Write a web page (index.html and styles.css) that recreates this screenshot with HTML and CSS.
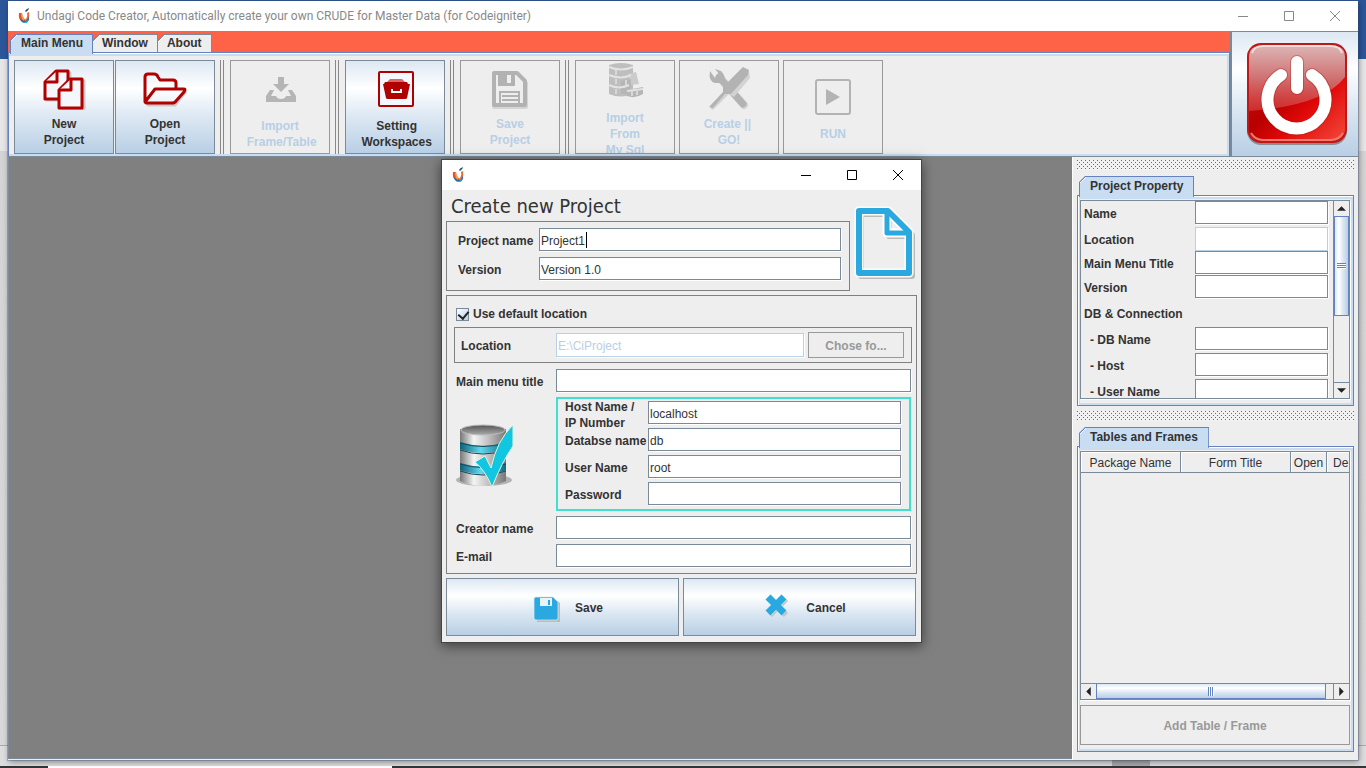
FILE: index.html
```html
<!DOCTYPE html>
<html lang="en">
<head>
<meta charset="utf-8">
<title>Undagi Code Creator</title>
<link rel="stylesheet" href="styles.css">
</head>
<body>
<svg class="defs" width="0" height="0" aria-hidden="true">
  <defs>
    <symbol id="logo" viewBox="0 0 13 16">
      <path d="M1 5Q0 11 4 13Q6 14 8 13L5 9Q4 7 4 5Z" fill="#e8512a"/>
      <path d="M9 5Q10 9 7 12L8 13Q12 12 11 4Z" fill="#f26a2e"/>
      <path d="M4 5Q4 8 6 10V13Q3 11 3 6Z" fill="#f9a04a"/>
      <path d="M1 8Q2 12 6 13Q10 13 11 8Q12 14 7 15Q2 15 1 8Z" fill="#1b6f9f"/>
      <path d="M4 14Q7 15 10 12L9 15L6 15Z" fill="#25b4d4"/>
      <path d="M7 3Q8 1 11 0Q11 2 8 4Z" fill="#1f4f78"/>
    </symbol>
    <symbol id="min" viewBox="0 0 12 12"><path d="M1 6.5H11" stroke="currentColor"/></symbol>
    <symbol id="max" viewBox="0 0 12 12"><path d="M1.5 1.5H10.5V10.5H1.5Z" fill="none" stroke="currentColor"/></symbol>
    <symbol id="close" viewBox="0 0 12 12"><path d="M1 1L11 11M11 1L1 11" stroke="currentColor"/></symbol>
    <linearGradient id="metal"><stop offset="0" stop-color="#777"/><stop offset=".3" stop-color="#f4f4f4"/><stop offset=".6" stop-color="#c4c4c4"/><stop offset="1" stop-color="#777"/></linearGradient>
    <linearGradient id="band"><stop offset="0" stop-color="#0d5f76"/><stop offset=".45" stop-color="#5fd9f0"/><stop offset="1" stop-color="#0d6a82"/></linearGradient>
    <linearGradient id="lid" x2="0" y2="1"><stop offset="0" stop-color="#555"/><stop offset="1" stop-color="#aaa"/></linearGradient>
    <linearGradient id="red" x2="1" y2="1"><stop offset="0" stop-color="#c81414"/><stop offset=".45" stop-color="#b80000"/><stop offset=".65" stop-color="#e00808"/><stop offset="1" stop-color="#f24a3c"/></linearGradient>
    <linearGradient id="gloss" x2="0" y2="1"><stop offset="0" stop-color="#dcb4b4"/><stop offset=".5" stop-color="#d07070"/><stop offset="1" stop-color="#d83c3c" stop-opacity=".7"/></linearGradient>
  </defs>
</svg>

<div class="window">
  <header class="titlebar">
    <svg class="logo"><use href="#logo"/></svg>
    <h1>Undagi Code Creator, Automatically create your own CRUDE for Master Data (for Codeigniter)</h1>
    <button class="winbtn" aria-label="Minimize"><svg><use href="#min"/></svg></button>
    <button class="winbtn" aria-label="Maximize"><svg><use href="#max"/></svg></button>
    <button class="winbtn" aria-label="Close"><svg><use href="#close"/></svg></button>
  </header>

  <div class="ribbon">
    <div class="ribbon-main">
      <div class="tabs menu-tabs" role="tablist">
        <button class="tab active" role="tab" aria-selected="true">Main Menu</button>
        <button class="tab" role="tab">Window</button>
        <button class="tab" role="tab">About</button>
      </div>
      <div class="toolbar">
        <button class="tool small-icon">
          <svg viewBox="0 0 44 44"><g fill="none" stroke-linejoin="round" stroke-width="3"><g stroke="#c9c9c9"><path d="M15 7H28V34H5V17Z"/><path d="M29 15H42V43H19V25Z"/></g><g stroke="#b00000" fill="#f4f8fc"><path d="M14 5H26V33H3V16Z"/><path d="M15 5V16H3"/><path d="M28 13H40V42H17V24Z"/><path d="M29 13V24H17"/></g></g></svg>
          <span>New<br>Project</span>
        </button>
        <button class="tool small-icon">
          <svg viewBox="0 0 44 44"><g fill="none" stroke-linejoin="round" stroke-width="3"><path d="M4 39H32L43 25" stroke="#c9c9c9"/><path d="M2 36V11Q2 8 5 8H11Q14 8 15 11L17 14H30Q33 14 33 17V22M2 36L12 23H41Q43 23 41 26L33 35Q32 37 29 37H3Z" stroke="#b00000"/></g></svg>
          <span>Open<br>Project</span>
        </button>
        <span class="sep"></span>
        <button class="tool" disabled>
          <svg viewBox="0 0 48 48"><g fill="#b5b5b5"><path d="M22 13H28V20H33L25 28L17 20H22Z"/><path d="M14 26H18L15 32H20Q21 35 25 35Q29 35 30 32H35L32 26H36L40 32V38H10V32Z"/></g></svg>
          <span>Import<br>&nbsp;Frame/Table</span>
        </button>
        <span class="sep"></span>
        <button class="tool">
          <svg viewBox="0 0 48 48"><rect x="8" y="8" width="34" height="34" rx="1" fill="#f3f8fd" stroke="#b00000" stroke-width="2"/><path d="M19 15H31L34 18H16Z" fill="#d66"/><path d="M14 18H36L37 20H39L36 34Q36 35 34 35H17Q15 35 15 34L12 20H13Z" fill="#b00000"/><path d="M21 25V28H30V25" fill="none" stroke="#fff" stroke-width="2"/></svg>
          <span>&nbsp;Setting<br>&nbsp;Workspaces</span>
        </button>
        <span class="sep"></span>
        <button class="tool small-icon" disabled>
          <svg viewBox="0 0 44 44"><g fill="none" stroke-linejoin="round" stroke-width="4"><path d="M6 8V41H38V16" stroke="#d4d4d4"/><path d="M6 7H29L37 15V39H6Z" stroke="#b2b2b2"/></g><path d="M10 6H27V20H10Z" fill="#b2b2b2"/><path d="M19 9H23V17H19Z" fill="#eee"/><path d="M12 37V26H31V37M14 30H30M14 34H30" fill="none" stroke="#b2b2b2" stroke-width="2"/></svg>
          <span>Save<br>Project</span>
        </button>
        <span class="sep"></span>
        <button class="tool gap-after" disabled>
          <svg viewBox="0 0 48 48"><g fill="#bebebe"><path d="M8 9Q20 5 32 9V38Q20 43 8 38Z"/><path d="M27 18L35 16L38 28L30 29Z" fill="#cbcbcb"/><path d="M20 25L30 23V38H20ZM26 34L42 31V38Q34 43 26 40Z" fill="#b6b6b6"/></g><path d="M8 11Q20 16 32 11M8 19Q20 24 30 19M8 29Q18 34 28 29M26 35L42 33" fill="none" stroke="#e2e2e2" stroke-width="2"/><path d="M15 14V19M15 23V28M15 33V38M25 24V29M31 35V40M36 35V39" stroke="#d8d8d8" stroke-width="2"/></svg>
          <span>Import<br>From<br>My Sql</span>
        </button>
        <button class="tool small-icon gap-after" disabled>
          <svg viewBox="0 0 44 44"><g stroke-linecap="round" fill="none"><path d="M13 12L37 39" stroke="#d5d5d5" stroke-width="8"/><path d="M12 11L36 38" stroke="#b3b3b3" stroke-width="7"/></g><path d="M3 5Q1 15 8 17L17 17Q20 11 14 5L8 3L12 8L8 12Z" fill="#b3b3b3"/><path d="M42 6L34 3L16 22L19 27L3 42L6 44L22 28L27 31L43 12Z" fill="#d3d3d3"/><path d="M36 1L42 4L41 9L24 28L18 28L6 42L2 41L16 26L16 21Z" fill="#b3b3b3"/></svg>
          <span>Create ||&nbsp;<br>GO!</span>
        </button>
        <button class="tool" disabled>
          <svg viewBox="0 0 48 48"><rect x="7" y="8" width="34" height="34" rx="2" fill="none" stroke="#b3b3b3" stroke-width="2"/><path d="M17 17V33L31 25Z" fill="#b3b3b3"/></svg>
          <span>RUN</span>
        </button>
      </div>
    </div>
    <button class="power" aria-label="Exit">
      <svg viewBox="0 0 100 102"><rect x="0" y="1" width="100" height="101" rx="14" fill="#8a8f94"/><rect x="0" y="0" width="100" height="100" rx="14" fill="#c01818"/><rect x="2" y="3" width="96" height="94" rx="11" fill="url(#red)"/><path d="M2 14Q2 3 14 3H86Q98 3 98 14V34Q76 63 2 68Z" fill="url(#gloss)"/><path d="M5 10Q7 3 16 3H84Q93 3 95 10" fill="none" stroke="#f3dede" stroke-width="2"/><path d="M4 90Q8 97 16 97H84Q92 97 96 90" fill="none" stroke="#f47a70" stroke-width="2"/><g fill="none" stroke-linecap="round"><path d="M34 32A29 29 0 1 0 65 32M50 19V45" stroke="#a01818" stroke-opacity=".35" stroke-width="14"/><path d="M34 32A29 29 0 1 0 65 32M50 19V45" stroke="#fff" stroke-width="12"/></g></svg>
    </button>
  </div>

  <div class="workspace">
    <main class="desktop"></main>
    <aside class="sidebar">
      <div class="grip"></div>
      <section class="group">
        <div class="tabs" role="tablist"><button class="tab active" role="tab" aria-selected="true">Project Property</button></div>
        <div class="panel">
          <div class="scrollpane props">
            <form class="props-form">
              <div class="prop"><label for="p1">Name</label><input id="p1" type="text"></div>
              <div class="prop tight"><label for="p2">Location</label><input id="p2" type="text" disabled></div>
              <div class="prop tight"><label for="p3">Main Menu Title</label><input id="p3" type="text"></div>
              <div class="prop"><label for="p4">Version</label><input id="p4" type="text"></div>
              <div class="prop"><span>DB &amp; Connection</span></div>
              <div class="prop sub"><label for="p5">- DB Name</label><input id="p5" type="text"></div>
              <div class="prop sub"><label for="p6">- Host</label><input id="p6" type="text"></div>
              <div class="prop sub"><label for="p7">- User Name</label><input id="p7" type="text"></div>
            </form>
            <div class="vscroll">
              <button aria-label="Scroll up"><svg viewBox="0 0 8 4"><path d="M0 4L4 0L8 4Z"/></svg></button>
              <div class="track"><div class="thumb"></div></div>
              <button aria-label="Scroll down"><svg viewBox="0 0 8 4"><path d="M0 0H8L4 4Z"/></svg></button>
            </div>
          </div>
        </div>
      </section>
      <div class="grip"></div>
      <section class="group grow">
        <div class="tabs" role="tablist"><button class="tab active" role="tab" aria-selected="true">Tables and Frames</button></div>
        <div class="panel">
          <div class="scrollpane tables">
            <div class="table-view">
              <table>
                <colgroup><col class="c-package"><col class="c-form"><col class="c-open"><col class="c-last"></colgroup>
                <thead><tr><th>Package Name</th><th>Form Title</th><th>Open</th><th class="cut">De</th></tr></thead>
              </table>
            </div>
            <div class="hscroll">
              <button aria-label="Scroll left"><svg viewBox="0 0 4 8"><path d="M4 0V8L0 4Z"/></svg></button>
              <div class="track"><div class="thumb"></div></div>
              <button aria-label="Scroll right"><svg viewBox="0 0 4 8"><path d="M0 0V8L4 4Z"/></svg></button>
            </div>
          </div>
          <button class="plain add" disabled>Add Table / Frame</button>
        </div>
      </section>
    </aside>
  </div>
</div>

<div class="dialog" role="dialog" aria-label="Create new Project">
  <div class="titlebar">
    <svg class="logo"><use href="#logo"/></svg>
    <span class="fill"></span>
    <button class="winbtn" aria-label="Minimize"><svg><use href="#min"/></svg></button>
    <button class="winbtn" aria-label="Maximize"><svg><use href="#max"/></svg></button>
    <button class="winbtn" aria-label="Close"><svg><use href="#close"/></svg></button>
  </div>
  <form class="dialog-body">
    <div class="intro">
      <div class="intro-main">
        <h2>Create new Project</h2>
        <div class="box basics">
          <label for="name">Project name</label><input id="name" type="text" value="Project1">
          <label for="version">Version</label><input id="version" type="text" value="Version 1.0">
          <span class="caret"></span>
        </div>
      </div>
      <svg class="file-icon" viewBox="0 0 64 76"><g fill="none" stroke-linejoin="round"><path d="M8 9H37L59 30V71H8Z" stroke="#b9b9b9" stroke-width="6"/><path d="M36 9V31H57" stroke="#b9b9b9" stroke-width="6"/><path d="M6 6H35L56 27V68H6Z" stroke="#fff" stroke-width="9"/><path d="M34 6V28H56" stroke="#fff" stroke-width="9"/><path d="M6 6H35L56 27V68H6Z" stroke="#29a9e0" stroke-width="6"/><path d="M34 6V28H56" stroke="#29a9e0" stroke-width="5"/></g></svg>
    </div>

    <div class="box details">
      <label class="check"><input type="checkbox" checked>Use default location</label>
      <div class="box location">
        <label for="loc">Location</label>
        <input id="loc" type="text" value="E:\CiProject" disabled>
        <button class="plain" type="button" disabled>Chose fo...</button>
      </div>
      <div class="fields">
        <label for="menu">Main menu title</label><input id="menu" type="text">
        <svg class="db-icon" viewBox="0 0 60 68"><ellipse cx="28" cy="58" rx="28" ry="6" fill="#999" opacity=".7"/><path d="M4 7V59Q27 69 50 59V7Z" fill="url(#metal)"/><path d="M4 20Q27 27 50 20V27Q27 35 4 27ZM4 41Q27 48 50 41V48Q27 56 4 48Z" fill="url(#band)"/><path d="M4 21Q27 28 50 21M4 28Q27 36 50 28M4 42Q27 49 50 42M4 49Q27 57 50 49" fill="none" stroke="#14485a"/><ellipse cx="27" cy="8" rx="22" ry="5" fill="url(#lid)" stroke="#bbb"/><path d="M19 40L29 34L35 46Q41 18 57 3L57 24Q46 40 36 65Q29 48 19 40Z" fill="#10c6e0" stroke="#e8f4d8" stroke-width="1"/></svg>
        <div class="database">
          <label class="two-line" for="host">Host Name /<br>IP Number</label><input id="host" type="text" value="localhost">
          <label for="db">Databse name</label><input id="db" type="text" value="db">
          <label for="user">User Name</label><input id="user" type="text" value="root">
          <label for="pass">Password</label><input id="pass" type="password">
        </div>
        <label for="creator">Creator name</label><input id="creator" type="text">
        <label for="email">E-mail</label><input id="email" type="email">
      </div>
    </div>

    <div class="actions">
      <button type="button" class="action">
        <svg viewBox="0 0 28 28"><path d="M5 6H24L28 9V28H5Z" fill="#bbb"/><path d="M2 5Q2 3 4 3H21L26 8V24Q26 26 24 26H4Q2 26 2 24Z" fill="#29a9e0" stroke="#d9effa" stroke-width=".7"/><path d="M8 4H20V12H8Z" fill="#e7f4fb"/><path d="M16 6H18V11H16Z" fill="#29a9e0"/></svg>
        Save
      </button>
      <button type="button" class="action">
        <svg viewBox="0 0 28 28"><path d="M7 5L23 21M23 5L7 21" stroke="#c4c4c4" stroke-width="6"/><path d="M5 3L21 19M21 3L5 19" stroke="#e4f3fb" stroke-width="8"/><path d="M5 3L21 19M21 3L5 19" stroke="#29a9e0" stroke-width="7"/></svg>
        Cancel
      </button>
    </div>
  </form>
</div>
</body>
</html>
```
FILE: styles.css
```css
* { box-sizing: border-box; }

:root {
  --steel: #7a8a99;
  --blue: #6382bf;
  --pale: #c8ddf2;
  --face: #eee;
  --metal: linear-gradient(#dde8f3, #fff 30%, #dde8f3 60%, #b8cfe5);
}

body {
  margin: 0;
  height: 100vh;
  padding: 1px 8px 8px;
  overflow: hidden;
  font: bold 12px/16px "Liberation Sans", Arial, sans-serif;
  color: #333;
  background:
    linear-gradient(#fff, #fff) 48px 100% / 344px 2px no-repeat,
    linear-gradient(#333538, #333538) 0 100% / 100% 2px no-repeat,
    linear-gradient(#aaa, #aaa) 1112px 100% / 38px 8px no-repeat,
    linear-gradient(#2b579a 59px, #e6e6e6 59px, #e6e6e6 151px, #d4d4d4 151px, #d8d8d8 745px, #aaa 745px, #aaa 746px, #ddd 746px);
}

button, input { font: inherit; color: inherit; margin: 0; border-radius: 0; }
button { padding: 0; border: 0; background: none; }
h1, h2 { margin: 0; font-weight: normal; }
.defs { position: absolute; }

/* windows */
.window {
  height: 100%;
  display: flex;
  flex-direction: column;
  background: var(--face);
  box-shadow: 0 0 0 1px #39527d55, 1px 2px 6px #0006;
}
.titlebar {
  flex: none;
  display: flex;
  align-items: center;
  height: 30px;
  padding-left: 10px;
  background: #fff;
  color: #888;
}
.titlebar h1 { flex: 1; font: 12px/16px Roboto, "Open Sans", sans-serif; color: #888; }
.logo { width: 13px; height: 16px; margin-right: 6px; }
.fill { flex: 1; }
.winbtn { width: 46px; height: 28px; display: grid; place-items: center; }
.winbtn svg { width: 12px; height: 12px; }

/* tabs */
.tabs { display: flex; padding-left: 2px; }
.tab {
  height: 19px;
  padding: 0 9px;
  border: 1px solid var(--steel);
  border-bottom: 0;
  background: linear-gradient(135deg, var(--steel) 5px, #fff 5px, #fff 6px, var(--face) 6px) border-box;
  clip-path: polygon(6px 0, 100% 0, 100% 100%, 0 100%, 0 6px);
}
.tab + .tab { border-left: 0; }
.tab.active {
  position: relative;
  height: 21px;
  margin-bottom: -2px;
  padding: 0 10px 2px;
  border-color: var(--blue);
  background: linear-gradient(135deg, var(--blue) 5px, #fff 5px, #fff 6px, var(--pale) 6px) border-box;
}

/* ribbon */
.ribbon { flex: none; display: flex; border-bottom: 1px solid var(--steel); }
.ribbon-main { flex: 1; display: flex; flex-direction: column; }
.menu-tabs { background: #ff6347; padding-top: 3px; height: 21px; }
.menu-tabs .tab { height: 18px; padding-bottom: 1px; }
.menu-tabs .tab.active { height: 20px; padding: 0 9px 3px 10px; }
.toolbar {
  flex: 1;
  display: flex;
  padding: 7px 5px 2px;
  border: 1px solid var(--blue);
  border-bottom: 0;
  box-shadow: inset 0 1px #fff, inset 0 3px var(--pale), inset 0 -2px var(--pale), inset -2px 0 var(--pale);
}
.tool {
  flex: none;
  width: 100px;
  height: 94px;
  margin-right: 1px;
  display: flex;
  flex-direction: column;
  align-items: center;
  justify-content: center;
  gap: 6px;
  overflow: hidden;
  border: 1px solid var(--steel);
  background: var(--metal);
  line-height: 16px;
}
.tool svg { flex: none; width: 48px; height: 48px; }
.tool.small-icon svg { width: 44px; height: 44px; }
.tool:disabled { color: #b8cfe5; background: var(--face); border-color: #999; }
.gap-after { margin-right: 4px; }
.sep {
  flex: none;
  width: 4px;
  margin: 0 6px 0 4px;
  border: solid #888;
  border-width: 0 1px;
}
.power {
  flex: none;
  width: 128px;
  display: grid;
  place-items: center;
  border: 1px solid var(--steel);
  border-width: 1px 0 0 2px;
  background: var(--metal);
}
.power svg { width: 100px; height: 102px; margin-left: 4px; }

/* work area */
.workspace { flex: 1; min-height: 0; display: flex; }
.desktop { flex: 1; margin-bottom: 1px; background: gray; border: 1px solid var(--steel); border-width: 0 0 1px 1px; }
.sidebar {
  flex: none;
  width: 286px;
  display: flex;
  flex-direction: column;
  padding: 3px 4px 8px;
  border-left: 1px solid #fff;
}
.grip {
  flex: none;
  height: 10px;
  margin-bottom: 6px;
  background:
    conic-gradient(from 270deg at 1px 1px, #5c6c7b 90deg, transparent 0) 0 0 / 4px 4px,
    conic-gradient(from 270deg at 1px 1px, #5c6c7b 90deg, transparent 0) 2px 2px / 4px 4px,
    #f2f2f2;
}
.group { display: flex; flex-direction: column; margin-bottom: 5px; }
.group.grow { flex: 1; min-height: 0; margin: 0; }
.panel {
  flex: 1;
  display: flex;
  flex-direction: column;
  padding: 4px 3px 6px 2px;
  border: 1px solid var(--blue);
  box-shadow: inset 1px 1px #fff, inset 0 0 0 2px var(--pale), inset 0 3px var(--pale);
}
.scrollpane { border: 1px solid var(--steel); box-shadow: 1px 1px #fff; overflow: hidden; }

/* text boxes */
input[type="text"], input[type="password"], input[type="email"] {
  min-width: 0;
  width: 100%;
  height: 23px;
  padding: 3px 1px 0;
  border: 1px solid var(--steel);
  background: #fff;
  box-shadow: 1px 1px #fff;
  font-weight: normal;
  outline: 0;
}
input[type="text"]:disabled { height: 24px; padding-top: 1px; border-color: #b8cfe5; color: #b8cfe5; }

.props { height: 199px; display: flex; }
.props-form { flex: 1; padding: 0 5px 0 3px; }
.prop { display: grid; grid-template-columns: 111px 1fr; height: 26px; line-height: 26px; }
.prop.tight { height: 24px; }
.prop.sub label { padding-left: 6px; }

/* scroll bars */
.vscroll, .hscroll { display: flex; flex: none; }
.vscroll { flex-direction: column; width: 16px; border-left: 1px solid var(--steel); }
.hscroll { height: 16px; border-top: 1px solid var(--steel); }
.vscroll button, .hscroll button { flex: none; width: 15px; height: 15px; display: grid; place-items: center; fill: #222; }
.vscroll button svg { width: 9px; height: 5px; }
.hscroll button svg { width: 5px; height: 9px; }
.track { flex: 1; background: var(--face); }
.thumb { border: 1px solid var(--blue); }
.vscroll .track { border-bottom: 1px solid var(--steel); }
.vscroll .thumb {
  height: 60%;
  background:
    repeating-linear-gradient(var(--blue) 0 1px, #fff 1px 2px) center / 9px 6px no-repeat,
    linear-gradient(90deg, #dde8f3, #fff 30%, #dde8f3 60%, #b8cfe5);
}
.hscroll .track { border-right: 1px solid var(--steel); }
.hscroll .thumb {
  width: 97%;
  height: 15px;
  border-top: 0;
  background:
    repeating-linear-gradient(90deg, var(--blue) 0 1px, #fff 1px 2px) center / 6px 9px no-repeat,
    var(--metal);
}

.tables { flex: 1; display: flex; flex-direction: column; }
.table-view { flex: 1; overflow: hidden; }
table { width: 302px; table-layout: fixed; border-collapse: separate; border-spacing: 0; }
.c-package { width: 100px; }
.c-form { width: 110px; }
.c-open { width: 36px; }
.c-last { width: 56px; }
th {
  height: 21px;
  padding: 2px 0 0;
  border: solid var(--steel);
  border-width: 0 1px 1px 0;
  box-shadow: inset 1px 1px #fff;
  font-weight: normal;
}
th.cut { text-align: left; padding-left: 6px; }
.plain { padding-top: 2px; border: 1px solid #999; color: #999; background: var(--face); }
.add { height: 40px; margin-top: 5px; }

/* dialog */
.dialog {
  position: absolute;
  top: 159px;
  left: calc(50% - 242px);
  width: 481px;
  border: 1px solid #444;
  background: var(--face);
  box-shadow: 0 3px 12px #0008;
}
.dialog .titlebar { color: #000; }
.dialog-body { padding: 0 4px 6px; }
.intro { display: grid; grid-template-columns: 404px 1fr; }
.intro h2 { padding: 4px 5px 3px; font: 20px/24px "DejaVu Sans Condensed", "Noto Sans", sans-serif; }
.box { border: 1px solid gray; }
.basics {
  position: relative;
  display: grid;
  grid-template-columns: 81px 1fr;
  row-gap: 6px;
  align-items: center;
  padding: 6px 8px 10px 11px;
}
.basics label, .location label, .fields > label, .database label { padding-top: 2px; }
.caret { position: absolute; left: 139px; top: 10px; width: 1px; height: 16px; background: #000; }
.file-icon { width: 64px; height: 76px; margin: 15px 0 0 3px; }
.details { margin-top: 4px; padding-bottom: 6px; }
.check { display: flex; align-items: center; gap: 4px; padding: 10px 9px 5px; }
.check input {
  appearance: none;
  width: 13px;
  height: 13px;
  border: 1px solid var(--steel);
  background: linear-gradient(135deg, #fff, #b8cfe5);
}
.check input:checked::before {
  content: "";
  display: block;
  width: 5px;
  height: 8px;
  margin-left: 3px;
  border: solid #222;
  border-width: 0 2px 2px 0;
  transform: rotate(40deg);
}
.location {
  display: grid;
  grid-template-columns: 95px 1fr 96px;
  align-items: center;
  height: 36px;
  margin: 0 4px 6px 7px;
  padding: 0 7px 0 6px;
}
.location input { width: calc(100% - 4px); }
.location .plain { height: 26px; }
.fields {
  display: grid;
  grid-template-columns: 100px 1fr;
  row-gap: 5px;
  align-items: center;
  padding: 0 5px 0 9px;
}
.db-icon { width: 60px; height: 68px; margin-top: 4px; }
.database {
  display: grid;
  grid-template-columns: 83px 1fr;
  grid-auto-rows: 27px;
  align-items: center;
  padding: 0 8px 2px 7px;
  border: 2px solid #40e0d0;
}
.database label { white-space: nowrap; }
.database .two-line { align-self: start; padding-top: 0; }
.actions { display: grid; grid-template-columns: 1fr 1fr; gap: 4px; margin-top: 4px; padding-right: 1px; }
.action {
  height: 58px;
  display: flex;
  align-items: center;
  justify-content: center;
  gap: 15px;
  padding: 2px 0 0 10px;
  border: 1px solid var(--steel);
  background: var(--metal);
}
.action svg { width: 28px; height: 28px; }
```
